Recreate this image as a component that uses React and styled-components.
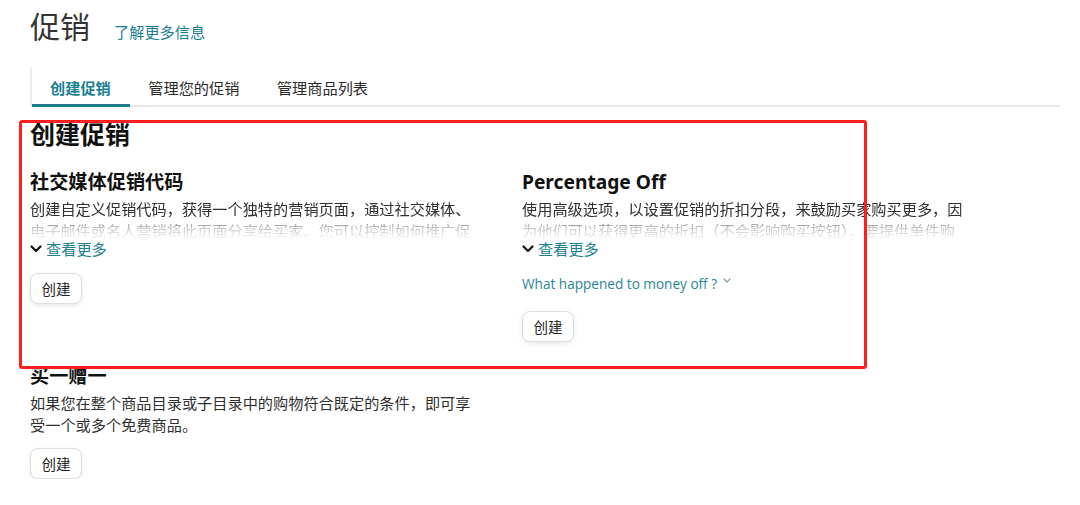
import React from 'react'
import styled, { createGlobalStyle } from 'styled-components'

const GlobalStyle = createGlobalStyle`
  body {
    margin: 0;
    background: #fff;
    font-family: "Noto Sans", "Noto Sans CJK SC", sans-serif;
    color: #333;
  }
`

const Page = styled.div`
  position: relative;
  padding: 9px 20px 0 30px;
`

const TitleRow = styled.div`
  display: flex;
  align-items: baseline;
`

const Title = styled.h1`
  margin: 0;
  font-size: 30px;
  line-height: 36px;
  font-weight: 400;
  color: #333;
`

const TitleLink = styled.a`
  margin-left: 24px;
  font-size: 15.2px;
  color: #1b7f91;
  text-decoration: none;
`

const TabBar = styled.div`
  display: flex;
  margin-top: 22px;
  border-left: 2px solid #ececec;
  border-bottom: 2px solid #e8e8e8;
`

const Tab = styled.div`
  padding: 11px 19.5px 6px 18px;
  margin-bottom: -2px;
  font-size: 15.2px;
  line-height: 20px;
  font-weight: ${p => (p.$active ? 700 : 400)};
  color: ${p => (p.$active ? '#1b7f91' : '#2b2b2b')};
  border-bottom: 3px solid ${p => (p.$active ? '#1b7a8c' : 'transparent')};
`

const SectionTitle = styled.h2`
  margin: 12px 0 0;
  font-size: 25px;
  line-height: 30px;
  font-weight: 700;
  color: #111;
`

const Grid = styled.div`
  display: grid;
  grid-template-columns: 492px 1fr;
  row-gap: 22.5px;
  margin-top: 20.5px;
`

const Card = styled.div`
  display: flex;
  flex-direction: column;
  align-items: flex-start;
`

const CardTitle = styled.h3`
  margin: 0 0 4px;
  font-size: 19.2px;
  line-height: 24px;
  font-weight: 700;
  color: #111;
`

const Desc = styled.p`
  margin: 0;
  max-width: 448px;
  font-size: 15.2px;
  line-height: 22px;
  color: #2f2f2f;
  ${p =>
    p.$clamped &&
    `
    max-height: 40px;
    overflow: hidden;
    -webkit-mask-image: linear-gradient(180deg, #000 52%, rgba(0,0,0,.3) 72%, rgba(0,0,0,.05) 100%);
    mask-image: linear-gradient(180deg, #000 52%, rgba(0,0,0,.3) 72%, rgba(0,0,0,.05) 100%);
  `}
`

const SeeMore = styled.a`
  display: flex;
  align-items: center;
  gap: 4px;
  font-size: 15.2px;
  line-height: 22px;
  color: #1b7f91;
  text-decoration: none;

  svg {
    width: 12px;
    height: 8px;
    margin-top: 1px;
  }
`

const MoneyLink = styled.a`
  display: flex;
  align-items: center;
  gap: 6px;
  margin-top: 14px;
  font-family: "Open Sans", sans-serif;
  font-size: 13.6px;
  line-height: 20px;
  color: #2b8596;
  text-decoration: none;

  svg {
    width: 8px;
    height: 5px;
    margin-top: -6px;
  }
`

const Button = styled.button`
  margin-top: ${p => p.$gap || 13}px;
  width: 52px;
  height: 31px;
  padding: 0;
  background: #fff;
  border: 1px solid #dcdfdf;
  border-radius: 8px;
  box-shadow: 0 2px 5px rgba(213, 217, 217, 0.55);
  font-family: "Noto Sans CJK SC", sans-serif;
  font-size: 14.5px;
  color: #1f1f1f;
`

const Annotation = styled.div`
  position: absolute;
  left: 19px;
  top: 120px;
  width: 848px;
  height: 249px;
  box-sizing: border-box;
  border: 3px solid #ff1f1f;
  border-radius: 3px;
  pointer-events: none;
`

const Chevron = () => (
  <svg viewBox="0 0 12 8" fill="none">
    <path d="M1.5 1.5 6 6l4.5-4.5" stroke="#111" strokeWidth="2.2" strokeLinecap="round" strokeLinejoin="round" />
  </svg>
)

const SmallChevron = () => (
  <svg viewBox="0 0 8 5" fill="none">
    <path d="M1 1l3 3 3-3" stroke="#7a9aa2" strokeWidth="1.1" strokeLinecap="round" strokeLinejoin="round" />
  </svg>
)

export default function App() {
  return (
    <Page>
      <GlobalStyle />
      <TitleRow>
        <Title>促销</Title>
        <TitleLink href="#">了解更多信息</TitleLink>
      </TitleRow>

      <TabBar>
        <Tab $active>创建促销</Tab>
        <Tab>管理您的促销</Tab>
        <Tab>管理商品列表</Tab>
      </TabBar>

      <SectionTitle>创建促销</SectionTitle>

      <Grid>
        <Card>
          <CardTitle>社交媒体促销代码</CardTitle>
          <Desc $clamped>
            创建自定义促销代码，获得一个独特的营销页面，通过社交媒体、电子邮件或名人营销将此页面分享给买家。您可以控制如何推广促销，以及向谁推广。
          </Desc>
          <SeeMore href="#"><Chevron />查看更多</SeeMore>
          <Button>创建</Button>
        </Card>

        <Card>
          <CardTitle>Percentage Off</CardTitle>
          <Desc $clamped>
            使用高级选项，以设置促销的折扣分段，来鼓励买家购买更多，因为他们可以获得更高的折扣（不会影响购买按钮）。要提供单件购买折扣，请使用价格折扣。
          </Desc>
          <SeeMore href="#"><Chevron />查看更多</SeeMore>
          <MoneyLink href="#">What happened to money off ?<SmallChevron /></MoneyLink>
          <Button $gap={17}>创建</Button>
        </Card>

        <Card>
          <CardTitle>买一赠一</CardTitle>
          <Desc>
            如果您在整个商品目录或子目录中的购物符合既定的条件，即可享受一个或多个免费商品。
          </Desc>
          <Button $gap={12}>创建</Button>
        </Card>
      </Grid>

      <Annotation />
    </Page>
  )
}
